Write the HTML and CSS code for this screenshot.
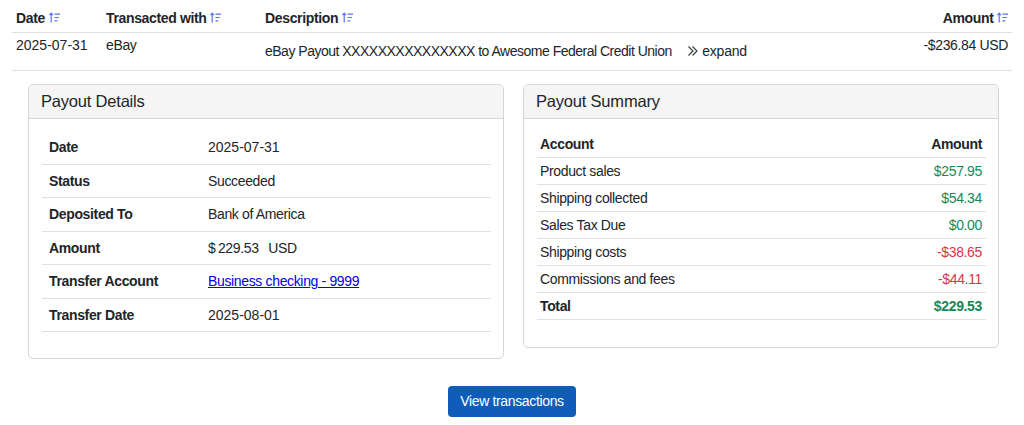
FILE: index.html
```html
<!DOCTYPE html>
<html lang="en">

<head>
  <meta charset="UTF-8" />
  <title>Payout</title>
  <meta name="viewport" content="width=device-width, initial-scale=1.0" />
  <link rel="stylesheet" href="styles.css">
</head>

<body>
  <div class="page">

    <!-- Transactions table -->
    <table class="tx-table">
      <thead>
        <tr>
          <th class="col-date">Date <svg class="sort-icon" viewBox="0 0 10 10"><path d="M2 9.5V1M0.4 2.8L2 1 3.6 2.8M5 2h5M5 5h4M5 8h2.5" /></svg></th>
          <th class="col-who">Transacted with <svg class="sort-icon" viewBox="0 0 10 10"><path d="M2 9.5V1M0.4 2.8L2 1 3.6 2.8M5 2h5M5 5h4M5 8h2.5" /></svg></th>
          <th>Description <svg class="sort-icon" viewBox="0 0 10 10"><path d="M2 9.5V1M0.4 2.8L2 1 3.6 2.8M5 2h5M5 5h4M5 8h2.5" /></svg></th>
          <th class="num">Amount <svg class="sort-icon" viewBox="0 0 10 10"><path d="M2 9.5V1M0.4 2.8L2 1 3.6 2.8M5 2h5M5 5h4M5 8h2.5" /></svg></th>
        </tr>
      </thead>
      <tbody>
        <tr>
          <td class="date">2025-07-31</td>
          <td>eBay</td>
          <td class="desc">
            eBay Payout XXXXXXXXXXXXXXX to Awesome Federal Credit Union
            <span class="expand"><svg class="chev" viewBox="0 0 12 12"><path d="M1.5 1.5L6 6 1.5 10.5M5.5 1.5L10 6 5.5 10.5" /></svg>expand</span>
          </td>
          <td class="num">-$236.84 USD</td>
        </tr>
      </tbody>
    </table>

    <div class="cards">
      <!-- Details -->
      <div class="card">
        <div class="card-header">Payout Details</div>
        <div class="card-body">
          <table class="detail-table">
            <tr><th>Date</th><td class="date">2025-07-31</td></tr>
            <tr><th>Status</th><td>Succeeded</td></tr>
            <tr><th>Deposited To</th><td>Bank of America</td></tr>
            <tr><th>Amount</th><td>$&thinsp;229.53 <span class="currency">USD</span></td></tr>
            <tr><th>Transfer Account</th><td><a href="#">Business checking - 9999</a></td></tr>
            <tr><th>Transfer Date</th><td class="date">2025-08-01</td></tr>
          </table>
        </div>
      </div>

      <!-- Summary -->
      <div class="card">
        <div class="card-header">Payout Summary</div>
        <div class="card-body">
          <table class="summary-table">
            <thead>
              <tr><th>Account</th><th class="num">Amount</th></tr>
            </thead>
            <tbody>
              <tr><td>Product sales</td><td class="num pos">$257.95</td></tr>
              <tr><td>Shipping collected</td><td class="num pos">$54.34</td></tr>
              <tr><td>Sales Tax Due</td><td class="num pos">$0.00</td></tr>
              <tr><td>Shipping costs</td><td class="num neg">-$38.65</td></tr>
              <tr><td>Commissions and fees</td><td class="num neg">-$44.11</td></tr>
              <tr class="total"><td>Total</td><td class="num pos">$229.53</td></tr>
            </tbody>
          </table>
        </div>
      </div>
    </div>

    <div class="actions">
      <button class="btn-primary">View transactions</button>
    </div>

  </div>
</body>

</html>
```

FILE: styles.css
```css
:root {
  --text: #212529;
  --border: #dee2e6;
  --green: #198754;
  --red: #dc3545;
  --primary: #0f5cb9;
}

body {
  margin: 0;
  font-family: 'Liberation Sans', Arial, sans-serif;
  font-size: 14px;
  letter-spacing: -0.35px;
  color: var(--text);
  background: #fff;
}

.page {
  padding: 2px 12px 0 12px;
}

table {
  border-collapse: collapse;
  width: 100%;
}

.num {
  text-align: right;
}

.date {
  letter-spacing: 0;
}

/* Top table */
.tx-table th {
  text-align: left;
  font-weight: bold;
  line-height: 20px;
  padding: 6px 4px 4px;
  border-bottom: 1px solid var(--border);
  white-space: nowrap;
}

.tx-table th.num {
  text-align: right;
}

.tx-table .col-date {
  width: 82px;
}

.tx-table .col-who {
  width: 151px;
}

.tx-table td {
  vertical-align: top;
  line-height: 20px;
  padding: 2px 4px 0;
  border-bottom: 1px solid var(--border);
}

.tx-table td.desc {
  vertical-align: middle;
  padding-top: 8px;
  padding-bottom: 9px;
  letter-spacing: -0.5px;
}

.sort-icon {
  width: 11px;
  height: 11px;
  vertical-align: 0;
  fill: none;
  stroke: #5a73e6;
  stroke-width: 1.1;
}

.expand {
  margin-left: 12px;
  cursor: pointer;
  letter-spacing: -0.2px;
}

.chev {
  width: 12px;
  height: 12px;
  margin-right: 3px;
  vertical-align: -1px;
  fill: none;
  stroke: #333;
  stroke-width: 1.1;
}

/* Cards */
.cards {
  display: flex;
  align-items: flex-start;
  gap: 19px;
  margin: 13px 13px 0 16px;
}

.card {
  flex: 1;
  border: 1px solid #d6d6d6;
  border-radius: 5px;
  overflow: hidden;
}

.card-header {
  background: #f5f5f5;
  border-bottom: 1px solid #d6d6d6;
  padding: 6px 12px;
  font-size: 16.5px;
  line-height: 21px;
  letter-spacing: -0.2px;
}

.card-body {
  padding: 12px 12px 13px 13px;
}

.detail-table {
  margin-bottom: 13px;
}

.detail-table th,
.detail-table td {
  text-align: left;
  padding: 6px 7px;
  line-height: 20.5px;
  border-bottom: 1px solid var(--border);
}

.detail-table th {
  width: 145px;
  font-weight: bold;
}

.detail-table a {
  color: #0000ee;
}

.currency {
  margin-left: 6px;
}

.summary-table {
  margin-bottom: 14px;
}

.summary-table th,
.summary-table td {
  text-align: left;
  padding: 3px 4px 3px 3px;
  line-height: 20px;
  border-bottom: 1px solid var(--border);
}

.summary-table th.num,
.summary-table td.num {
  text-align: right;
}

.summary-table .total td {
  font-weight: bold;
}

.pos {
  color: var(--green);
}

.neg {
  color: var(--red);
}

/* Button */
.actions {
  display: flex;
  justify-content: center;
  margin-top: 27px;
}

.btn-primary {
  font-family: inherit;
  font-size: 14px;
  letter-spacing: -0.35px;
  line-height: 19px;
  color: #fff;
  background: var(--primary);
  border: none;
  border-radius: 4px;
  padding: 6px 12px;
  cursor: pointer;
}
```
